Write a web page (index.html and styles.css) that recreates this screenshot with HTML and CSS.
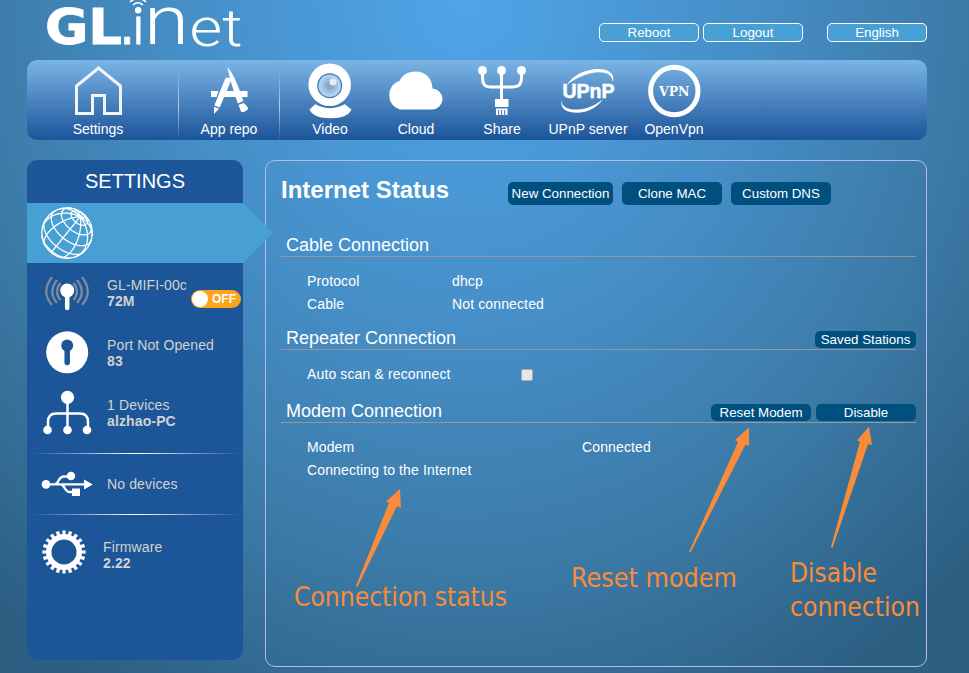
FILE: index.html
```html
<!DOCTYPE html>
<html lang="en">
<head>
<meta charset="utf-8">
<title>GL.iNet</title>
<link rel="stylesheet" href="styles.css">
</head>
<body>
<div class="page">
  <header class="top">
    <svg class="logo" width="200" height="52" viewBox="43 0 200 52" fill="#fff">
      <g class="logo-bold">
        <text x="45" y="43.500" font-size="49" textLength="77" lengthAdjust="spacingAndGlyphs">GL</text>
        <text x="121.500" y="43.500" font-size="36" textLength="11" lengthAdjust="spacingAndGlyphs">.</text>
      </g>
      <g class="logo-light">
        <text x="132.700" y="44" font-size="50" stroke="#fff" stroke-width="1.200">i</text>
        <text x="144" y="44" font-size="69" textLength="45" lengthAdjust="spacingAndGlyphs">n</text>
        <text x="189.500" y="45.500" font-size="51" textLength="53" lengthAdjust="spacingAndGlyphs">et</text>
      </g>
      <circle cx="138.200" cy="10.300" r="3.200"/>
      <g fill="none" stroke="#fff" stroke-width="1.600"><path d="M133 5Q138 .5 143 5M130 2Q138 -5 146 2"/></g>
    </svg>
    <div class="account">
      <button class="pill">Reboot</button>
      <button class="pill">Logout</button>
      <button class="pill lang">English</button>
    </div>
  </header>

  <nav class="menu">
    <a class="tab home">
      <svg width="60" height="58" viewBox="68 62 60 58"><path d="M76.500 113.500V86L98.500 68L120.500 86V113.500H104.500V95.500H92.500V113.500Z" fill="none" stroke="#f4f4f8" stroke-width="3"/></svg>
      <span>Settings</span>
    </a>
    <a class="tab repo">
      <svg width="60" height="58" viewBox="199 62 60 58" fill="#fff">
        <path d="M211 91H218.500L216.500 97H211ZM225 91H234L236.500 97H222.500ZM239.500 91H247.500V97H242Z"/>
        <path d="M225.300 78.500Q228 76 231.500 79.500L219.700 107.500L214.300 105.500Z"/>
        <path d="M214 106.800L219 108.800L214 114Z"/>
        <path d="M227.300 67Q235 75 243.300 101L237.800 103.500Q231 84 227.300 67Z"/>
        <path d="M238.500 105L243.500 103Q249 107 247.800 109.500Q243 113.500 241 111.500Z"/>
      </svg>
      <span>App repo</span>
    </a>
    <a class="tab">
      <svg width="60" height="58" viewBox="300 62 60 58">
        <path d="M316 103.500Q330 112 344 103.500L351.500 109.500Q348 118 330.500 118.300Q313 118 309.500 109.500Z" fill="#fff"/>
        <path d="M315 103Q330 111.500 345 103" fill="none" stroke="#4079bb" stroke-width="2"/>
        <circle cx="329.700" cy="84.700" r="21.300" fill="#fff"/>
        <circle cx="329.700" cy="85.700" r="12.500" fill="#3c76b8"/><circle cx="329.700" cy="85.700" r="11.300" fill="#b2d0ec"/><circle cx="329.700" cy="85.700" r="8" fill="#9dbfe2"/><circle cx="329.700" cy="85.700" r="4.800" fill="#8ba9cb"/>
        <circle cx="333" cy="82" r="3.500" fill="#e2effa"/>
      </svg>
      <span>Video</span>
    </a>
    <a class="tab">
      <svg width="60" height="58" viewBox="387.500 62 60 58" fill="#fff"><path d="M402 109.500A13.200 14.500 0 0 1 401 81C404 75 409 71.500 417 71.500C427 71.500 434 78.500 434 88.500A10.500 10.500 0 0 1 433 109.500Z"/></svg>
      <span>Cloud</span>
    </a>
    <a class="tab">
      <svg width="60" height="58" viewBox="472 62 60 58" fill="#fff">
        <circle cx="482.500" cy="70.500" r="4.500"/><circle cx="501.500" cy="70.500" r="4.500"/><circle cx="521.500" cy="70.500" r="4.500"/>
        <path d="M482.500 72V78Q482.500 87 490 87H513Q521.500 87 521.500 78V72M501.500 72V100" fill="none" stroke="#fff" stroke-width="3"/>
        <path d="M495 99H508.500V107H495ZM496 108.500H507.500V115H496Z"/><path d="M498.700 110V115M501.700 110V115M504.700 110V115" stroke="#356fb0" stroke-width="1"/>
      </svg>
      <span>Share</span>
    </a>
    <a class="tab">
      <svg width="60" height="58" viewBox="558 62 60 58" fill="#fff">
        <path d="M567 85C574 72 597 65 609 71.500Q615 75 612.500 82Q612.500 76 607 73.500C595 69.500 578 76 567 85Z"/>
        <path d="M562 100Q561 108 572 109.500C584 110 594 107 603 99C593 114 574 115 565 110Q560 106 562 100Z"/>
        <text class="upnp" x="562.500" y="98" textLength="52" lengthAdjust="spacingAndGlyphs">UPnP</text>
      </svg>
      <span>UPnP server</span>
    </a>
    <a class="tab">
      <svg width="60" height="58" viewBox="644 62 60 58" fill="#fff">
        <circle cx="674.300" cy="91" r="23.700" fill="none" stroke="#fff" stroke-width="5"/>
        <text class="vpn" x="659" y="96" textLength="30.500" lengthAdjust="spacingAndGlyphs">VPN</text>
      </svg>
      <span>OpenVpn</span>
    </a>
  </nav>

  <div class="body">
    <aside class="side">
      <h2>SETTINGS</h2>
      <div class="entry active">
        <svg width="54" height="54" viewBox="-27 -27 54 54" fill="none" stroke="#fff" stroke-width="1.300"><circle r="25.200"/><path id="grid"/></svg>
      </div>
      <div class="entry">
        <svg width="54" height="44" viewBox="40 271 54 44" fill="none">
          <path d="M52 277Q40.500 292 52 305M57 280Q47.500 292 57 303M60.500 283Q53.500 292 60.500 300" stroke="#7f8b9c" stroke-width="2.200"/>
          <path d="M82 277Q93.500 292 82 305M77 280Q86.500 292 77 303M73.500 283Q80.500 292 73.500 300" stroke="#7f8b9c" stroke-width="2.200"/>
          <circle cx="67.200" cy="290.500" r="7" fill="#fff"/><path d="M67.200 294V308" stroke="#fff" stroke-width="4.500" stroke-linecap="round"/>
        </svg>
        <p>GL-MIFI-00c<br><b>72M</b></p>
        <span class="toggle"><i></i>OFF</span>
      </div>
      <div class="entry">
        <svg width="54" height="44" viewBox="40 331 54 44"><circle cx="67.200" cy="352.300" r="21" fill="#fff"/><circle cx="67.200" cy="345.500" r="6" fill="#1c5698"/><path d="M67.200 348V362.500" stroke="#1c5698" stroke-width="5.500" stroke-linecap="round"/></svg>
        <p>Port Not Opened<br><b>83</b></p>
      </div>
      <div class="entry">
        <svg width="54" height="46" viewBox="40 390 54 46" fill="#fff"><circle cx="67.500" cy="397.300" r="6.600"/><circle cx="47.500" cy="430" r="4.300"/><circle cx="67.500" cy="430" r="4.300"/><circle cx="87" cy="430" r="4.300"/><path d="M67.500 400V428M48 428V422Q48 413.500 56 413.500H80Q88 413.500 88 422V428" fill="none" stroke="#fff" stroke-width="2.500"/></svg>
        <p>1 Devices<br><b>alzhao-PC</b></p>
      </div>
      <hr>
      <div class="entry">
        <svg width="54" height="30" viewBox="40 469 54 30" fill="#fff"><circle cx="46" cy="484.400" r="4.300"/><circle cx="71" cy="476" r="4.200"/><path d="M84 479.500V489.500L92.800 484.500ZM72 488.500H80V496H72Z"/><path d="M46 484.400H86M55 484C59 484 58 476.500 64 476.500H70M61 484.500C65 484.500 64 492 70 492H74" fill="none" stroke="#fff" stroke-width="2.300"/></svg>
        <p>No devices</p>
      </div>
      <hr class="tight">
      <div class="entry firmware">
        <svg width="50" height="50" viewBox="-25 -25 50 50" fill="none" stroke="#fff"><circle r="15.300" stroke-width="5.500"/><circle r="19.300" stroke-width="4.600" pathLength="200" stroke-dasharray="5.300 4.700" stroke-dashoffset="2.650"/></svg>
        <p>Firmware<br><b>2.22</b></p>
      </div>
    </aside>

    <main class="panel">
      <div class="title">
        <h1>Internet Status</h1>
        <button class="btn new">New Connection</button>
        <button class="btn">Clone MAC</button>
        <button class="btn">Custom DNS</button>
      </div>
      <section class="cable">
        <div class="head"><h3>Cable Connection</h3></div>
        <dl><dt>Protocol</dt><dd>dhcp</dd><dt>Cable</dt><dd>Not connected</dd></dl>
      </section>
      <section class="repeater">
        <div class="head"><h3>Repeater Connection</h3><button class="btn small saved">Saved Stations</button></div>
        <label><span>Auto scan &amp; reconnect</span><i class="check"></i></label>
      </section>
      <section class="modem">
        <div class="head"><h3>Modem Connection</h3><button class="btn small">Reset Modem</button><button class="btn small">Disable</button></div>
        <dl><dt>Modem</dt><dd>Connected</dd><dt>Connecting to the Internet</dt><dd></dd></dl>
      </section>
    </main>
  </div>

  <svg class="notes" width="969" height="673" viewBox="0 0 969 673" fill="#fc8b38">
    <path d="M356 586L389 503L386 501.500L400 489L401 508L397 506L357.500 587Z"/>
    <path d="M689 552L738 442L735 440L749 427.500L749 446L745.500 444.500L690.500 552.500Z"/>
    <path d="M831 547L860 441.500L857 440.500L869 426.500L872 445L868 444L832.500 548Z"/>
    <text x="294" y="606" textLength="213" lengthAdjust="spacingAndGlyphs">Connection status</text>
    <text x="571" y="587" textLength="166" lengthAdjust="spacingAndGlyphs">Reset modem</text>
    <text x="790" y="582" textLength="87" lengthAdjust="spacingAndGlyphs">Disable</text>
    <text x="790" y="616" textLength="130" lengthAdjust="spacingAndGlyphs">connection</text>
  </svg>
</div>
<script src="globe.js"></script>
</body>
</html>
```
FILE: styles.css
```css
* { box-sizing: border-box; }
body, h1, h2, h3, p, dl, dd { margin: 0; }
body {
  height: 673px;
  overflow: hidden;
  font: 14px/16px "Liberation Sans", Arial, sans-serif;
  color: #fff;
  background: radial-gradient(700px 800px at 48% 0, #4fa5e8 0%, #468fc8 40%, #3c7ba8 70%, #2c5f82 100%);
}
svg { display: block; flex: none; }
button { font: 13.33px/16px "Liberation Sans", Arial, sans-serif; color: #fff; padding: 0; }

.page { position: relative; width: 969px; height: 673px; padding-left: 27px; }
.top { display: flex; justify-content: space-between; width: 900px; height: 60px; padding-left: 16px; }
.logo-bold { font-family: "DejaVu Sans", sans-serif; font-weight: 700; stroke: #fff; stroke-width: .8px; }
.logo-light { font-family: Roboto, sans-serif; font-weight: 300; }
.account { display: flex; gap: 4px; padding-top: 23px; }
.pill { width: 100px; height: 19px; border: 1px solid #fff; border-radius: 5px; background: #489fd4; }
.lang { margin-left: 20px; }

.menu {
  display: flex;
  width: 900px;
  height: 80px;
  border-radius: 10px;
  background: linear-gradient(#7ab5e6, #1c5499);
}
.tab { display: flex; flex-direction: column; align-items: center; width: 86px; padding-top: 2px; white-space: nowrap; }
.tab span { margin-top: 1px; }
.tab.home { width: 152px; padding-right: 9px; }
.tab.repo { width: 101px; margin-right: 7px; }
.tab.home, .tab.repo {
  border-right: 1px solid;
  border-image: linear-gradient(transparent 10%, #b9cde8 55%, transparent) 1;
}
.upnp { font: 700 21px "Liberation Sans", Arial, sans-serif; stroke: #fff; stroke-width: .6px; }
.vpn { font: 700 13.5px "DejaVu Serif", serif; }

.body { display: flex; gap: 22px; margin-top: 20px; }
.side { width: 216px; height: 500px; border-radius: 10px; background: #1c5698; color: #d2d2d2; }
.side h2 { height: 43px; font-size: 20px; font-weight: 400; line-height: 43px; text-align: center; color: #fff; }
.side p, dl, label { letter-spacing: .13px; }
.entry { position: relative; display: flex; align-items: center; gap: 13px; height: 60px; padding-left: 13px; }
.active { background: #489fd4; }
.active::after {
  content: "";
  position: absolute;
  left: 216px;
  border: 30px solid transparent;
  border-left-color: #489fd4;
  border-right: 0;
}
.toggle {
  position: absolute;
  left: 164px;
  top: 27px;
  display: flex;
  align-items: center;
  gap: 4px;
  width: 50px;
  height: 18px;
  padding-left: 1px;
  border-radius: 9px;
  background: #fda41a;
  color: #fff;
  font-size: 12px;
  font-weight: 700;
}
.toggle i { width: 16px; height: 16px; border-radius: 50%; background: #fff; }
.side hr {
  height: 1px;
  margin: 10px 2px 0 4px;
  border: 0;
  background: linear-gradient(90deg, transparent, #fff, transparent);
}
.side hr.tight { margin-top: 0; }
.firmware { margin-top: 10px; padding-left: 12px; gap: 14px; }
.firmware svg { margin-top: -6px; }

.panel { width: 662px; height: 507px; padding: 0 10px 0 15px; border: 1px solid #b8b9ea; border-radius: 10px; }
.title { display: flex; gap: 9px; padding-top: 21px; height: 70px; }
h1 { width: 218px; font-size: 24px; line-height: 15px; }
.btn { width: 100px; height: 23px; border: 0; border-radius: 5px; background: #00507f; }
.btn.new { width: 105px; }
.btn.small { height: 17px; line-height: 17px; }
.btn.saved { width: 101px; }
.head { display: flex; gap: 5px; height: 26px; border-bottom: 1px solid #9c9496; }
.head h3 { flex: 1; padding-left: 5px; font-size: 18px; font-weight: 400; line-height: 28px; }
.head .btn { margin-top: 7px; }
dl { display: grid; grid-template-columns: 145px 1fr; padding: 13px 0 0 26px; line-height: 23px; }
.modem dl { grid-template-columns: 275px 1fr; }
.cable { height: 93px; }
.repeater { height: 73px; }
label { display: flex; align-items: center; padding: 13px 0 0 26px; line-height: 23px; }
label span { width: 214px; }
.check { width: 12px; height: 12px; border: 1px solid #aaa; border-radius: 2px; background: #e6e6e6; }

.notes { position: absolute; left: 0; top: 0; pointer-events: none; font: 27px "DejaVu Sans Condensed", "DejaVu Sans", sans-serif; font-stretch: condensed; }
```
FILE: globe.js
```js
// Orthographic wireframe of a globe whose north pole leans toward the viewer's upper right.
const R = 25.2, pole = [0.52, -0.64, 0.566];
const len = Math.hypot(pole[0], pole[1]);
const u = [-pole[1] / len, pole[0] / len, 0];
const v = [
  pole[1] * u[2] - pole[2] * u[1],
  pole[2] * u[0] - pole[0] * u[2],
  pole[0] * u[1] - pole[1] * u[0]
];
const rad = Math.PI / 180;
function point(lat, lon) {
  const c = Math.cos(lat * rad), s = Math.sin(lat * rad);
  return [0, 1, 2].map(i => pole[i] * s + c * (u[i] * Math.cos(lon * rad) + v[i] * Math.sin(lon * rad)));
}
let d = "";
function trace(points) {
  let pen = false;
  for (const p of points) {
    if (p[2] < 0) { pen = false; continue; }
    d += (pen ? "L" : "M") + (p[0] * R).toFixed(2) + " " + (p[1] * R).toFixed(2);
    pen = true;
  }
}
const steps = (a, b, f) => Array.from({ length: (b - a) / 3 + 1 }, (_, i) => f(a + i * 3));
for (const lat of [-36, -8, 20, 46, 68]) trace(steps(0, 360, lon => point(lat, lon)));
for (let lon = 18; lon < 378; lon += 36) trace(steps(-90, 90, lat => point(lat, lon)));
document.getElementById("grid").setAttribute("d", d);
```
